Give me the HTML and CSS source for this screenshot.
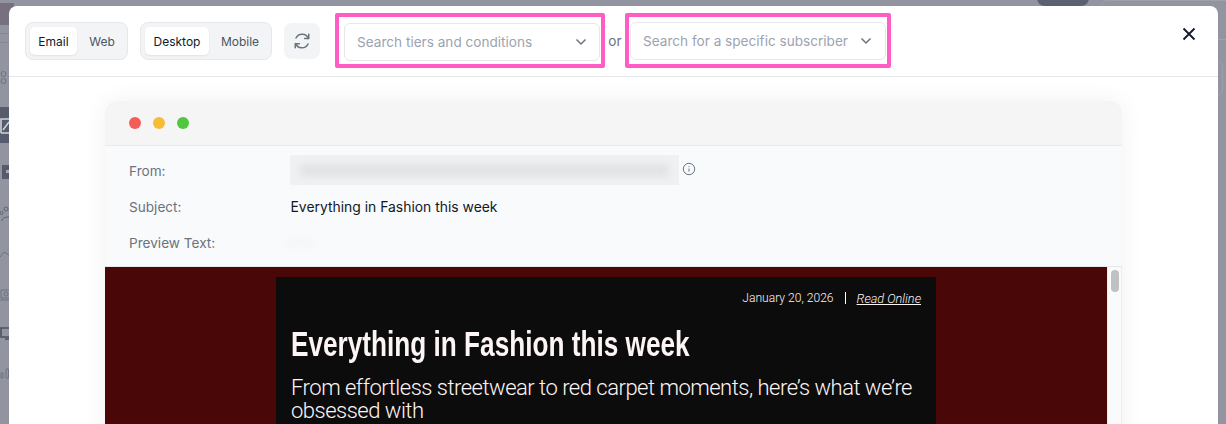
FILE: index.html
```html
<!DOCTYPE html>
<html lang="en">
<head>
<meta charset="utf-8">
<title>Preview</title>
<link rel="stylesheet" href="styles.css">
</head>
<body>
<div class="backdrop">
  <div class="back-thumb"></div>
  <div class="back-rule back-rule-a"></div>
  <div class="back-rule back-rule-b"></div>
  <div class="back-pill"></div>
  <div class="back-box"></div>
  <div class="back-card"></div>
  <div class="side">
    <div class="side-item side-glyphs"><svg width="9" height="14" viewBox="0 0 9 14"><g fill="none" stroke="#6d7280"><circle cx="3.500" cy="3" r="2.500"/><circle cx="3.500" cy="10" r="2.500"/></g></svg></div>
    <div class="side-item side-active"><svg width="9" height="20" viewBox="0 0 9 20"><path d="M1 18V4h8M1 18h8M3 15l6-8" fill="none" stroke="#cfd2d8" stroke-width="1.600"/></svg></div>
    <div class="side-item side-doc"><svg width="9" height="16" viewBox="0 0 9 16"><path d="M2 1h7v14H2z" fill="#565c6e"/><path d="M6 6h3v3H6z" fill="#a5a8b2"/></svg></div>
    <div class="side-item side-users"><svg width="9" height="16" viewBox="0 0 9 16"><g fill="none" stroke="#5f6472"><circle cx="6" cy="3" r="2"/><circle cx="1.500" cy="7" r="1.500"/><path d="M2 15c0-3 3-4 7-4"/></g></svg></div>
    <div class="side-item side-chart"><svg width="9" height="8" viewBox="0 0 9 8"><path d="M0 7l4-5 5 3" fill="none" stroke="#6d7280"/></svg></div>
    <div class="side-item side-screen"><svg width="9" height="12" viewBox="0 0 9 12"><path d="M9 1H1v8h8M0 11h9" fill="none" stroke="#6d7280"/><circle cx="6" cy="5" r="2" fill="none" stroke="#6d7280"/></svg></div>
    <div class="side-item side-monitor"><svg width="9" height="14" viewBox="0 0 9 14"><path d="M9 1H1v9h8M5 12h4" fill="none" stroke="#4d5364" stroke-width="1.600"/></svg></div>
    <div class="side-item side-bars"><svg width="9" height="11" viewBox="0 0 9 11"><path d="M1 5h2v5H1zM6 1h2.500v9H6z" fill="none" stroke="#6d7280"/></svg></div>
  </div>
</div>

<main class="modal">
  <header class="toolbar">
    <div class="segmented">
      <button class="seg seg-on seg-email">Email</button>
      <button class="seg seg-web">Web</button>
    </div>
    <div class="segmented">
      <button class="seg seg-on seg-desktop">Desktop</button>
      <button class="seg seg-mobile">Mobile</button>
    </div>
    <button class="refresh" aria-label="Refresh">
      <svg width="18" height="18" viewBox="0 0 24 24" fill="none" stroke="#6b7280" stroke-width="2" stroke-linecap="round" stroke-linejoin="round"><path d="M21 3v5.500h-5.500"/><path d="M20.500 8.500A9 9 0 0 0 4 8"/><path d="M3 21v-5.500h5.500"/><path d="M3.500 15.500A9 9 0 0 0 20 16"/></svg>
    </button>
    <div class="pick-frame pick-tiers">
      <div class="picker"><span>Search tiers and conditions</span>
        <svg width="12" height="8" viewBox="0 0 12 8" fill="none" stroke="#6b7280" stroke-width="1.500"><path d="M1.500 1.500 6 6l4.500-4.500"/></svg>
      </div>
    </div>
    <span class="or">or</span>
    <div class="pick-frame pick-sub">
      <div class="picker"><span>Search for a specific subscriber</span>
        <svg width="12" height="8" viewBox="0 0 12 8" fill="none" stroke="#6b7280" stroke-width="1.500"><path d="M1.500 1.500 6 6l4.500-4.500"/></svg>
      </div>
    </div>
    <button class="close" aria-label="Close">
      <svg width="14" height="14" viewBox="0 0 14 14" fill="none" stroke="#111827" stroke-width="1.800"><path d="M1.500 1.500l11 11M12.500 1.500l-11 11"/></svg>
    </button>
  </header>

  <section class="stage">
    <div class="window">
      <div class="titlebar">
        <i class="dot dot-red"></i><i class="dot dot-yellow"></i><i class="dot dot-green"></i>
      </div>
      <div class="meta">
        <div class="meta-row">
          <span class="meta-label">From:</span>
          <div class="meta-value from-value">
            <div class="blur-box"><div class="blur-line"></div></div>
            <svg class="info" width="14" height="14" viewBox="0 0 14 14" fill="none" stroke="#6b7280"><circle cx="7" cy="7" r="5.700"/><path d="M7 6.500v3.200M7 4.200v1" /></svg>
          </div>
        </div>
        <div class="meta-row">
          <span class="meta-label">Subject:</span>
          <span class="meta-value subject">Everything in Fashion this week</span>
        </div>
        <div class="meta-row">
          <span class="meta-label">Preview Text:</span>
          <div class="meta-value"><div class="blur-tiny"></div></div>
        </div>
      </div>
      <div class="email-pane">
        <div class="email-bg">
          <article class="email">
            <div class="dateline"><span>January 20, 2026</span><span class="sep"></span><a class="read" href="#">Read Online</a></div>
            <h1 class="headline">Everything in Fashion this week</h1>
            <p class="deck">From effortless streetwear to red carpet moments, here’s what we’re obsessed with</p>
          </article>
        </div>
        <div class="scroller"><div class="thumb"></div></div>
      </div>
    </div>
  </section>
</main>
</body>
</html>
```

FILE: styles.css
```css
* { box-sizing: border-box; }
html, body { margin: 0; height: 100%; overflow: hidden; }
body {
  background: #92959f;
  font-family: Inter, "Liberation Sans", sans-serif;
  width: 1226px;
  height: 424px;
  position: relative;
}
button { font-family: inherit; border: 0; padding: 0; background: none; }

.backdrop { height: 424px; width: 1226px; position: relative; overflow: hidden; }
.back-thumb { position: absolute; left: 0; top: 3px; width: 14px; height: 22px; background: #77707f; }
.back-rule { position: absolute; left: 0; width: 9px; height: 1px; background: #868993; }
.back-rule-a { top: 33px; }
.back-rule-b { top: 42px; }
.back-pill { position: absolute; left: 1037px; top: -10px; width: 52px; height: 16px; border-radius: 8px; background: #5b6072; }
.back-box { position: absolute; left: 1101px; top: 0; width: 140px; height: 40px; border: 1px solid #9ea1aa; border-radius: 6px; }
.back-card { position: absolute; left: 1200px; top: 60px; width: 23px; height: 36px; border: 1px solid #9ea1aa; border-radius: 6px; }
.side { position: absolute; left: 0; top: 107px; width: 9px; }
.side-item { position: absolute; left: 0; width: 9px; display: flex; align-items: center; }
.side-glyphs { top: -36px; height: 14px; }
.side-active { top: 0; height: 36px; background: #565c6e; }
.side-doc { top: 57px; height: 16px; }
.side-users { top: 99px; height: 16px; }
.side-chart { top: 143px; height: 8px; }
.side-screen { top: 182px; height: 12px; }
.side-monitor { top: 220px; height: 14px; }
.side-bars { top: 261px; height: 11px; }

.modal {
  position: absolute;
  left: 9px; top: 6px;
  width: 1209px; height: 418px;
  background: #fff;
  border-radius: 8px 8px 0 0;
  overflow: hidden;
}
.toolbar {
  height: 71px;
  border-bottom: 1px solid #e5e7eb;
  display: flex;
  align-items: flex-start;
  padding-left: 16px;
  position: relative;
}
.segmented {
  margin-top: 16px;
  height: 38px;
  display: flex;
  align-items: center;
  padding: 4px;
  background: #f3f4f6;
  border: 1px solid #e5e7eb;
  border-radius: 8px;
  margin-right: 12px;
}
.seg {
  height: 28px;
  font-size: 12px;
  color: #4b5563;
  border-radius: 5px;
  text-align: center;
}
.seg-on { background: #fff; color: #111827; box-shadow: 0 1px 2px rgba(0,0,0,.08); }
.seg-email { width: 47px; }
.seg-web { width: 46px; padding-left: 4px; }
.seg-desktop { width: 64px; }
.seg-mobile { width: 58px; padding-left: 4px; }
.refresh {
  margin-top: 17px;
  width: 36px; height: 36px;
  background: #f3f4f6;
  border-radius: 8px;
  display: flex; align-items: center; justify-content: center;
  margin-right: 15px;
}
.pick-frame {
  margin-top: 7px;
  height: 55px;
  border: 4px solid #ff5cc6;
  border-radius: 2px;
}
.pick-tiers { width: 270px; padding: 6px 1px 0 5px; }
.pick-sub { width: 266px; padding: 5px 1px 0; }
.picker {
  height: 38px;
  background: #fff;
  border: 1px solid #e5e7eb;
  border-radius: 6px;
  display: flex;
  align-items: center;
  justify-content: space-between;
  padding: 0 12px;
  font-size: 13.600px;
  color: #9ca3af;
}
.picker span { white-space: nowrap; }
.pick-sub .picker { padding-right: 13px; }
.or { margin-top: 27px; width: 20px; text-align: center; font-size: 13.600px; color: #6b7280; }
.close { position: absolute; left: 1173px; top: 21px; width: 14px; height: 14px; display: flex; }

.stage { padding: 24px 96px 0; height: 347px; }
.window {
  width: 1017px;
  height: 400px;
  border-radius: 12px 12px 0 0;
  background: #fff;
  box-shadow: 0 0 24px rgba(0,0,0,.06);
}
.titlebar {
  height: 45px;
  background: #f5f5f5;
  border-bottom: 1px solid #e9eaec;
  border-radius: 12px 12px 0 0;
  display: flex;
  align-items: center;
  gap: 12px;
  padding-left: 24px;
}
.dot { width: 12px; height: 12px; border-radius: 50%; display: block; }
.dot-red { background: #f45d56; }
.dot-yellow { background: #f6bc37; }
.dot-green { background: #4fc83f; }
.meta {
  height: 121px;
  background: #f9fafb;
  border-bottom: 1px solid #e5e7eb;
  padding: 7px 24px 0;
}
.meta-row { height: 36px; display: flex; align-items: center; }
.meta-label { width: 161.500px; font-size: 13.600px; color: #6b7280; }
.meta-value { font-size: 13.900px; color: #111827; }
.from-value { display: flex; align-items: center; gap: 3px; margin-left: -1px; margin-top: -2px; }
.blur-box {
  width: 389px; height: 30px;
  background: #f0f1f2;
  display: flex; align-items: center; padding: 0 10px;
}
.blur-line { flex: 1; height: 11px; background: #dfe0e2; filter: blur(4px); }
.info { margin-top: -2px; }
.blur-tiny { width: 26px; height: 8px; background: #f5f6f7; filter: blur(2px); margin-left: -4px; }

.email-pane { display: flex; height: 157px; }
.email-bg {
  width: 1002px;
  background: #4a0707;
  padding: 10px 0 0 171px;
  overflow: hidden;
}
.email {
  width: 660px;
  height: 160px;
  background: #0d0c0c;
  padding: 13px 15px 0;
  color: #fdf5f5;
}
.dateline {
  display: flex;
  justify-content: flex-end;
  align-items: center;
  font-family: Roboto, sans-serif;
  font-weight: 300;
  font-size: 12.100px;
  height: 16px;
}
.sep { width: 1px; height: 12px; background: #fff; margin: 0 11px 0 11px; }
.read { color: #fdf5f5; font-style: italic; font-size: 12.700px; }
.headline {
  margin: 16px 0 0;
  font-family: "Liberation Sans", sans-serif;
  font-size: 35px;
  line-height: 44px;
  font-weight: 700;
  white-space: nowrap;
  transform: scaleX(.748);
  transform-origin: left center;
}
.deck {
  margin: 10px 0 0;
  font-family: Roboto, sans-serif;
  font-size: 22px;
  line-height: 23px;
  font-weight: 300;
  letter-spacing: -.5px;
}
.scroller {
  width: 15px;
  background: #fafafa;
  border-left: 1px solid #eee;
  border-right: 1px solid #eee;
  padding: 3px 3px 0;
}
.thumb { width: 8px; height: 22px; border-radius: 4px; background: #c1c1c1; }
```
